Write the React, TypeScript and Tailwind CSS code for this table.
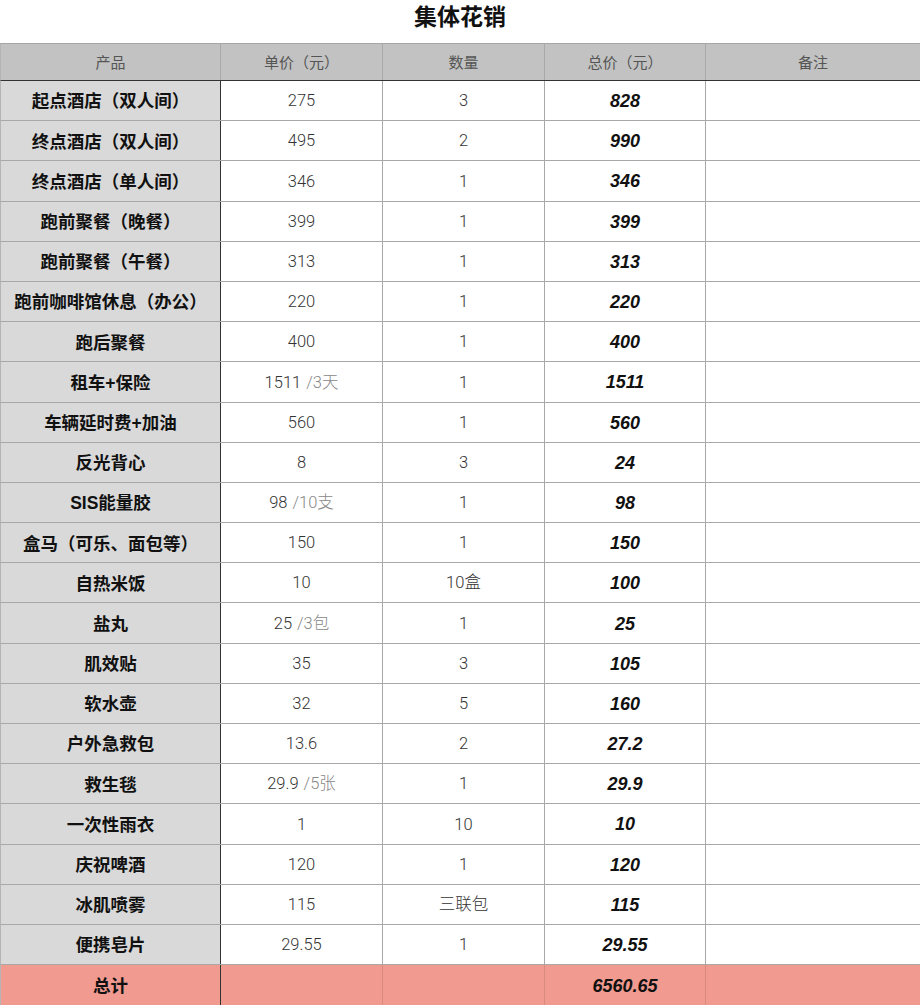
const rows: [string, string, string, string, string][] = [
  ["起点酒店（双人间）", "275", "", "3", "828"],
  ["终点酒店（双人间）", "495", "", "2", "990"],
  ["终点酒店（单人间）", "346", "", "1", "346"],
  ["跑前聚餐（晚餐）", "399", "", "1", "399"],
  ["跑前聚餐（午餐）", "313", "", "1", "313"],
  ["跑前咖啡馆休息（办公）", "220", "", "1", "220"],
  ["跑后聚餐", "400", "", "1", "400"],
  ["租车+保险", "1511", "/3天", "1", "1511"],
  ["车辆延时费+加油", "560", "", "1", "560"],
  ["反光背心", "8", "", "3", "24"],
  ["SIS能量胶", "98", "/10支", "1", "98"],
  ["盒马（可乐、面包等）", "150", "", "1", "150"],
  ["自热米饭", "10", "", "10盒", "100"],
  ["盐丸", "25", "/3包", "1", "25"],
  ["肌效贴", "35", "", "3", "105"],
  ["软水壶", "32", "", "5", "160"],
  ["户外急救包", "13.6", "", "2", "27.2"],
  ["救生毯", "29.9", "/5张", "1", "29.9"],
  ["一次性雨衣", "1", "", "10", "10"],
  ["庆祝啤酒", "120", "", "1", "120"],
  ["冰肌喷雾", "115", "", "三联包", "115"],
  ["便携皂片", "29.55", "", "1", "29.55"],
];

const cjk = "font-['Roboto','Noto_Sans_CJK_SC',sans-serif]";
const bold = "font-['Liberation_Sans','Noto_Sans_CJK_SC',sans-serif]";
const grid = "grid grid-cols-[220px_162px_162px_161px_1fr]";

export default function App() {
  return (
    <div className="w-[920px] bg-white">
      <div className={`h-[43px] text-center text-[23px] font-bold leading-[34px] text-[#111] ${bold}`}>
        集体花销
      </div>

      {/* Header */}
      <div className={`${grid} h-[38px] border-t border-b border-t-[#a5a5a5] border-b-[#333] border-l border-l-[#b5b5b5] bg-[#c1c2c1] text-[15px] text-[#555] ${cjk}`}>
        {["产品", "单价（元）", "数量", "总价（元）", "备注"].map((h, i) => (
          <div key={h} className={`flex items-center justify-center pt-[2px] ${i < 4 ? "border-r border-[#a9a9a9]" : ""}`}>
            {h}
          </div>
        ))}
      </div>

      {rows.map(([name, price, unit, qty, total]) => (
        <div key={name} className={`${grid} h-[40.2px] border-b border-b-[#a8a8a8] border-l border-l-[#b5b5b5]`}>
          <div className={`flex items-center justify-center pt-[2px] border-r border-r-[#333] bg-[#d9d9d9] text-[17.5px] font-bold text-[#111] ${bold}`}>
            {name}
          </div>
          <div className={`flex items-center justify-center pt-[2px] border-r border-r-[#a8a8a8] text-[16.5px] font-light text-[#333] ${cjk}`}>
            {price}
            {unit && <span className="ml-[5px] text-[#888]">{unit}</span>}
          </div>
          <div className={`flex items-center justify-center pt-[2px] border-r border-r-[#a8a8a8] text-[16.5px] font-light text-[#333] ${cjk}`}>
            {qty}
          </div>
          <div className={`flex items-center justify-center pt-[2px] border-r border-r-[#a8a8a8] text-[18px] font-bold italic text-[#111] ${bold}`}>
            {total}
          </div>
          <div />
        </div>
      ))}

      {/* Total */}
      <div className={`${grid} h-[40.2px] bg-[#f19a8f] border-l border-l-[#b5b5b5]`}>
        <div className={`flex items-center justify-center pt-[2px] border-r border-r-[#333] text-[17.5px] font-bold text-[#111] ${bold}`}>
          总计
        </div>
        <div className="border-r border-r-[#d88a80]" />
        <div className="border-r border-r-[#d88a80]" />
        <div className={`flex items-center justify-center pt-[2px] border-r border-r-[#d88a80] text-[18px] font-bold italic text-[#111] ${bold}`}>
          6560.65
        </div>
        <div />
      </div>
    </div>
  );
}
